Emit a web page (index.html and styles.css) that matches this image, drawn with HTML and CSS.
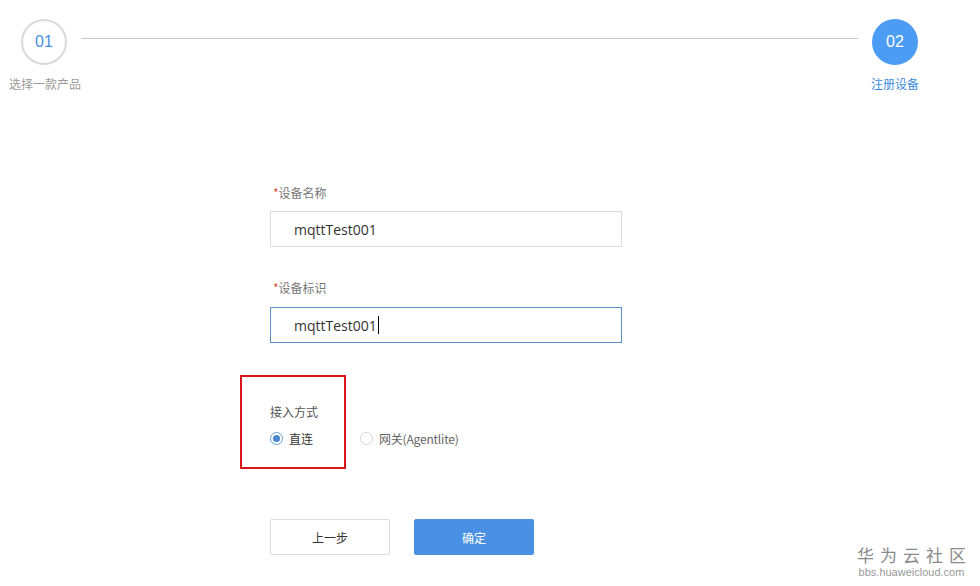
FILE: index.html
```html
<!DOCTYPE html>
<html lang="zh">
<head>
<meta charset="utf-8">
<title>注册设备</title>
<link rel="stylesheet" href="styles.css">
</head>
<body>
<div class="page">
  <div class="steps">
    <div class="step">
      <div class="circle">01</div>
      <div class="step-label">选择一款产品</div>
    </div>
    <div class="line"></div>
    <div class="step active">
      <div class="circle">02</div>
      <div class="step-label">注册设备</div>
    </div>
  </div>

  <form class="form">
    <div class="field">
      <div class="label"><span class="req">*</span>设备名称</div>
      <div class="input">mqttTest001</div>
    </div>
    <div class="field">
      <div class="label"><span class="req">*</span>设备标识</div>
      <div class="input focus">mqttTest001<span class="caret"></span></div>
    </div>
    <div class="access">
      <div class="highlight">
        <div class="label plain">接入方式</div>
        <div class="radios">
          <span class="radio checked"></span><span class="rtext">直连</span>
        </div>
      </div>
      <div class="radios second">
        <span class="radio"></span><span class="rtext light">网关(Agentlite)</span>
      </div>
    </div>
    <div class="buttons">
      <div class="btn">上一步</div>
      <div class="btn primary">确定</div>
    </div>
  </form>

  <div class="watermark">
    <div class="wm-cn">华为云社区</div>
    <div class="wm-en">bbs.huaweicloud.com</div>
  </div>
</div>
</body>
</html>
```

FILE: styles.css
```css
html, body {
  margin: 0;
  padding: 0;
  background: #ffffff;
}
body {
  width: 980px;
  height: 586px;
  overflow: hidden;
  font-family: "Microsoft YaHei", "Noto Sans CJK SC", "Liberation Sans", sans-serif;
}
.page {
  position: relative;
  width: 980px;
  height: 586px;
}
.steps {
  display: flex;
  align-items: flex-start;
  padding: 19px 62px 0 21px;
}
.step {
  display: flex;
  flex-direction: column;
  align-items: center;
  width: 46px;
}
.circle {
  box-sizing: border-box;
  width: 46px;
  height: 46px;
  border-radius: 50%;
  border: 2px solid #d9d9d9;
  color: #4a90e2;
  font-family: "Liberation Sans", Arial, sans-serif;
  font-size: 16px;
  display: flex;
  align-items: center;
  justify-content: center;
}
.step.active .circle {
  background: #4d9cf3;
  border-color: #4d9cf3;
  color: #ffffff;
}
.step-label {
  margin-top: 11px;
  margin-left: 2px;
  white-space: nowrap;
  font-size: 12px;
  line-height: 16px;
  color: #9b9b9b;
}
.step.active .step-label {
  color: #3c8be0;
  margin-left: 0;
}
.line {
  flex: 1;
  height: 1px;
  background: #c8c8c8;
  margin: 19px 14px 0 14px;
}
.form {
  margin: 93px 0 0 270px;
  width: 352px;
}
.field {
  margin-bottom: 33px;
}
.field + .field {
  margin-bottom: 32px;
}
.field:first-child .input {
  margin-top: -1px;
}
.label {
  font-size: 12px;
  line-height: 16px;
  color: #777777;
  margin-bottom: 11px;
  padding-left: 3px;
}
.label .req {
  color: #e0503c;
}
.input {
  box-sizing: border-box;
  height: 36px;
  border: 1px solid #dcdcdc;
  padding: 0 0 0 23px;
  display: flex;
  align-items: center;
  font-family: "Open Sans", "Liberation Sans", sans-serif;
  font-size: 14px;
  color: #333333;
}
.input.focus {
  border-color: #5a8fcc;
}
.caret {
  display: inline-block;
  width: 1px;
  height: 18px;
  background: #000;
  margin-left: 1px;
}
.access {
  display: flex;
  align-items: flex-end;
  margin-left: -30px;
}
.highlight {
  box-sizing: border-box;
  width: 106px;
  height: 94px;
  border: 2px solid #d9141a;
  padding: 27px 0 0 28px;
}
.label.plain {
  color: #555555;
  padding-left: 0;
  margin-bottom: 10px;
}
.radios {
  display: flex;
  align-items: center;
  font-size: 12px;
}
.radios.second {
  margin: 0 0 22px 14px;
}
.radio {
  box-sizing: border-box;
  width: 13px;
  height: 13px;
  border-radius: 50%;
  border: 1px solid #d4d4d4;
  background: #fff;
  margin-right: 6px;
  position: relative;
}
.radio.checked {
  border-color: #6a9fd8;
}
.radio.checked::after {
  content: "";
  position: absolute;
  left: 2px;
  top: 2px;
  width: 7px;
  height: 7px;
  border-radius: 50%;
  background: #4a88d0;
}
.rtext {
  color: #333333;
}
.rtext.light {
  color: #666666;
  letter-spacing: -0.2px;
}
.buttons {
  display: flex;
  gap: 24px;
  margin-top: 50px;
}
.btn {
  box-sizing: border-box;
  width: 120px;
  height: 36px;
  border: 1px solid #dcdcdc;
  border-radius: 2px;
  display: flex;
  align-items: center;
  justify-content: center;
  font-size: 12px;
  color: #333333;
}
.btn.primary {
  background: #4a90e2;
  border-color: #4a90e2;
  color: #ffffff;
}
.watermark {
  position: absolute;
  right: 14px;
  top: 545px;
  text-align: center;
  color: #8a8a8a;
}
.wm-cn {
  font-size: 17px;
  letter-spacing: 6px;
  margin-right: -6px;
  line-height: 20px;
}
.wm-en {
  font-family: "Liberation Sans", Arial, sans-serif;
  font-size: 11px;
  line-height: 14px;
  color: #999999;
}
```
